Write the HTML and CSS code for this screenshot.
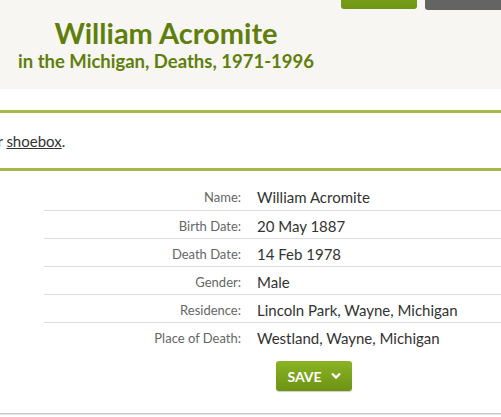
FILE: index.html
```html
<!DOCTYPE html>
<html>
<head>
<meta charset="utf-8">
<link rel="stylesheet" href="styles.css">
</head>
<body>
<header class="hero">
  <div class="titles">
    <h1 class="name">William Acromite</h1>
    <h2 class="coll">in the Michigan, Deaths, 1971-1996</h2>
  </div>
  <div class="actions">
    <button class="btn-top btn-green">SAVE</button>
    <button class="btn-top btn-grey"><span class="sq"></span>PRINT</button>
  </div>
</header>
<section class="notice">
  <p class="notice-text">Save this record to your computer or <a href="#">shoebox</a>.</p>
</section>
<section class="record">
  <table class="facts">
    <tr><th>Name:</th><td>William Acromite</td></tr>
    <tr><th>Birth Date:</th><td>20 May 1887</td></tr>
    <tr><th>Death Date:</th><td>14 Feb 1978</td></tr>
    <tr><th>Gender:</th><td>Male</td></tr>
    <tr><th>Residence:</th><td>Lincoln Park, Wayne, Michigan</td></tr>
    <tr><th>Place of Death:</th><td>Westland, Wayne, Michigan</td></tr>
  </table>
  <div class="save-row">
    <button class="btn-save">SAVE <svg class="chev" viewBox="0 0 10 8" width="10" height="8"><path d="M1 1.5 L5 5.5 L9 1.5" fill="none" stroke="#fff" stroke-width="2.4"/></svg></button>
  </div>
</section>
</body>
</html>
```
FILE: styles.css
```css
* { box-sizing: border-box; }
html, body { margin: 0; padding: 0; }
body {
  width: 501px;
  height: 417px;
  overflow: hidden;
  background: #fff;
  font-family: Lato, "Open Sans", sans-serif;
  color: #333;
}
.hero {
  background: #f7f6f2;
  height: 89px;
  display: flex;
  align-items: flex-start;
}
.titles {
  flex: 0 0 332px;
  width: 332px;
  text-align: center;
  padding-top: 16px;
}
.name {
  margin: 0;
  font-size: 29px;
  line-height: 34px;
  font-weight: 700;
  color: #5f7f0c;
}
.coll {
  margin: 0;
  font-size: 18.5px;
  line-height: 22px;
  font-weight: 700;
  color: #5f7f0c;
}
.actions {
  display: flex;
  flex: 0 0 auto;
  gap: 8px;
  margin-left: 9px;
  margin-top: -21px;
}
.btn-top {
  height: 30px;
  width: 76px;
  border: 0;
  border-radius: 3px;
  color: #fff;
  font-family: inherit;
  font-weight: 700;
  font-size: 14px;
  padding: 0;
}
.btn-green { background: linear-gradient(#86ad20, #6f9515); }
.btn-grey {
  width: 90px;
  height: 31px;
  background: #646462;
  text-align: left;
  padding-left: 14px;
  display: flex;
  align-items: center;
  gap: 10px;
}
.sq { width: 10px; height: 10px; background: #d8d8d6; display: inline-block; }
.notice {
  margin-top: 21px;
  border-top: 3px solid #a4b94a;
  border-bottom: 3px solid #a4b94a;
  height: 61px;
  display: flex;
  align-items: center;
  overflow: hidden;
}
.notice-text {
  margin: 0 0 0 -237px;
  white-space: nowrap;
  font-size: 15px;
  color: #333;
}
.notice-text a { color: #333; text-decoration: underline; }
.record {
  padding: 11px 0 0 44px;
  border-bottom: 1px solid #c9c9c9;
  box-shadow: 0 1px 1px #e4e4e4;
  height: 243px;
}
.facts {
  border-collapse: collapse;
  width: 600px;
}
.facts th, .facts td {
  height: 28px;
  padding: 3px 0 0 0;
  border-bottom: 1px solid #dcdcdc;
  vertical-align: middle;
}
.facts tr:last-child th, .facts tr:last-child td { border-bottom: 0; }
.facts th {
  width: 197px;
  text-align: right;
  font-weight: 400;
  font-size: 13px;
  color: #666;
}
.facts td {
  padding-left: 16px;
  font-size: 15px;
  color: #333;
}
.save-row {
  padding: 11px 0 0 232px;
}
.btn-save {
  width: 76px;
  height: 30px;
  border: 0;
  border-radius: 3px;
  background: linear-gradient(#8ab324, #6c9314);
  box-shadow: 0 1px 1px rgba(0,0,0,0.2);
  color: #fff;
  font-family: inherit;
  font-weight: 700;
  font-size: 14px;
  display: flex;
  align-items: center;
  justify-content: center;
  gap: 9px;
  padding: 0;
}
.chev { display: block; }
```
